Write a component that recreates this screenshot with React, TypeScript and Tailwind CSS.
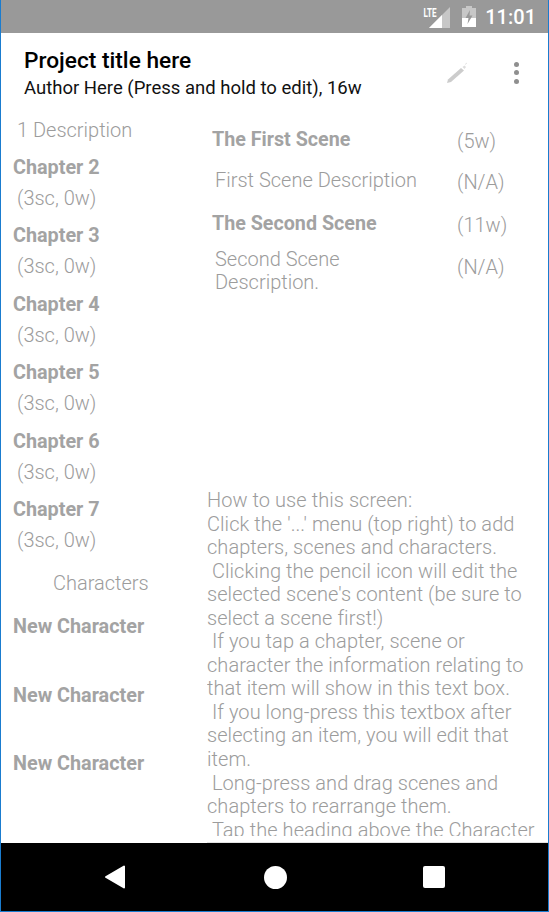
import React from 'react';

const chapters = ['Chapter 2', 'Chapter 3', 'Chapter 4', 'Chapter 5', 'Chapter 6', 'Chapter 7'];

const helpLines = [
  'How to use this screen:',
  "Click the '...' menu (top right) to add",
  'chapters, scenes and characters.',
  '\u00a0Clicking the pencil icon will edit the',
  'selected scene\'s content (be sure to',
  'select a scene first!)',
  '\u00a0If you tap a chapter, scene or',
  'character the information relating to',
  'that item will show in this text box.',
  '\u00a0If you long-press this textbox after',
  'selecting an item, you will edit that',
  'item.',
  '\u00a0Long-press and drag scenes and',
  'chapters to rearrange them.',
  '\u00a0Tap the heading above the Character',
];

function StatusBar(): JSX.Element {
  return (
    <div className="h-[33px] shrink-0 bg-[#999999] flex items-center justify-end pr-[12px]">
      <svg width="28" height="24" viewBox="0 0 28 24" className="mr-[11px]">
        <path d="M27 2 V23 H6 Z" fill="#ffffff" fillOpacity="0.45" />
        <path d="M19 10 V23 H6 Z" fill="#ffffff" />
        <text x="0.5" y="11.5" fontSize="12" fontWeight="700" fill="#ffffff" textLength="13" lengthAdjust="spacingAndGlyphs" fontFamily="Roboto, sans-serif">LTE</text>
      </svg>
      <svg width="14" height="21" viewBox="0 0 14 21" className="mr-[9px]">
        <path d="M4 0 H10 V2 H14 V21 H0 V2 H4 Z" fill="#ffffff" fillOpacity="0.45" />
        <path d="M0 12 H14 V21 H0 Z" fill="#ffffff" />
        <path d="M8 4 L3.5 12 H6.5 L5.5 18 L10.5 9.5 H7.5 Z" fill="#999999" />
      </svg>
      <span className="text-[20px] font-medium text-white font-['Roboto',sans-serif]">11:01</span>
    </div>
  );
}

function Header(): JSX.Element {
  return (
    <div className="h-[83px] shrink-0 flex items-start pl-[23px] pr-[29px] pt-[13px]">
      <div className="flex-1">
        <div className="text-[22.7px] leading-[30px] font-medium text-black">Project title here</div>
        <div className="text-[18.5px] leading-[24px] text-[#111111]">Author Here (Press and hold to edit), 16w</div>
      </div>
      <svg width="24" height="24" viewBox="0 0 24 24" className="mt-[15px] mr-[46px]">
        <path d="M3 22 L4 18.5 L17 7 L20 9.5 L7 21 Z" fill="#cccccc" />
        <path d="M18.5 6 L20.5 4.5 L22 6 L20.5 8 Z" fill="#dddddd" />
        <path d="M21 3.5 L23 2" stroke="#e4e4e4" strokeWidth="1" />
      </svg>
      <div className="mt-[15.5px] flex flex-col gap-[3.7px]">
        <span className="w-[5px] h-[5px] rounded-full bg-[#8f8f8f]" />
        <span className="w-[5px] h-[5px] rounded-full bg-[#8f8f8f]" />
        <span className="w-[5px] h-[5px] rounded-full bg-[#8f8f8f]" />
      </div>
    </div>
  );
}

function LeftColumn(): JSX.Element {
  return (
    <div className="w-[206px] shrink-0 text-[#9c9c9c]">
      <div className="pl-[16px] text-[20px] leading-[28px] font-light">1 Description</div>
      <div className="mt-[9px]">
        {chapters.map((name) => (
          <div key={name} className="h-[68.4px]">
            <div className="pl-[12px] text-[19.8px] leading-[29px] font-bold text-[#a3a3a3]">{name}</div>
            <div className="pl-[16px] mt-[2px] text-[20px] leading-[28px] font-light">(3sc, 0w)</div>
          </div>
        ))}
      </div>
      <div className="mt-[6px] pl-[52px] text-[20px] leading-[28px] font-light">Characters</div>
      <div className="mt-[15px]">
        {[0, 1, 2].map((i) => (
          <div key={i} className="h-[68.2px] pl-[12px] text-[19.8px] leading-[29px] font-bold text-[#a3a3a3]">
            New Character
          </div>
        ))}
      </div>
    </div>
  );
}

function SceneRow({ title, words }: { title: string; words: string }): JSX.Element {
  return (
    <div className="flex items-start">
      <div className="w-[250px] pl-[5px] text-[19.7px] leading-[29px] font-bold text-[#a3a3a3]">{title}</div>
      <div className="text-[20px] leading-[28px] font-light mt-[2px]">{words}</div>
    </div>
  );
}

function DescRow({ lines, words, offset }: { lines: string[]; words: string; offset: string }): JSX.Element {
  return (
    <div className="flex items-start">
      <div className="w-[250px] pl-[8px] text-[20px] leading-[23.5px] font-light">
        {lines.map((line) => (
          <div key={line}>{line}</div>
        ))}
      </div>
      <div className={offset + ' text-[20px] leading-[24px] font-light'}>{words}</div>
    </div>
  );
}

function RightColumn(): JSX.Element {
  return (
    <div className="flex-1 min-w-0 flex flex-col text-[#9c9c9c] border-b border-[#e2e2e2]">
      <div className="pt-[9px]">
        <SceneRow title="The First Scene" words="(5w)" />
        <div className="mt-[14px]">
          <DescRow lines={['First Scene Description']} words="(N/A)" offset="mt-[1px]" />
        </div>
        <div className="mt-[14.5px]">
          <SceneRow title="The Second Scene" words="(11w)" />
        </div>
        <div className="mt-[9px]">
          <DescRow lines={['Second Scene', 'Description.']} words="(N/A)" offset="mt-[7px]" />
        </div>
      </div>
      <div className="mt-auto mb-[6px] h-[347px] overflow-hidden text-[20px] leading-[23.55px] tracking-[0.06px] font-light whitespace-pre">
        {helpLines.map((line) => (
          <div key={line}>{line}</div>
        ))}
      </div>
    </div>
  );
}

function NavBar(): JSX.Element {
  return (
    <div className="h-[68px] shrink-0 bg-black flex items-center text-white">
      <div className="w-[547px] flex items-center justify-between pl-[102px] pr-[103px]">
        <svg width="24" height="26" viewBox="0 0 24 26">
          <path d="M21 2.5 V23.5 L3 13 Z" fill="#ffffff" stroke="#ffffff" strokeWidth="2" strokeLinejoin="round" />
        </svg>
        <span className="w-[23px] h-[23px] rounded-full bg-white" />
        <span className="w-[22px] h-[22px] rounded-[2px] bg-white" />
      </div>
    </div>
  );
}

export default function App(): JSX.Element {
  return (
    <div className="w-[549px] h-[912px] flex flex-col overflow-hidden bg-white border-x border-b border-[#1a7ccf] font-['Roboto',sans-serif]">
      <StatusBar />
      <Header />
      <div className="flex-1 min-h-0 flex">
        <LeftColumn />
        <RightColumn />
      </div>
      <NavBar />
    </div>
  );
}
